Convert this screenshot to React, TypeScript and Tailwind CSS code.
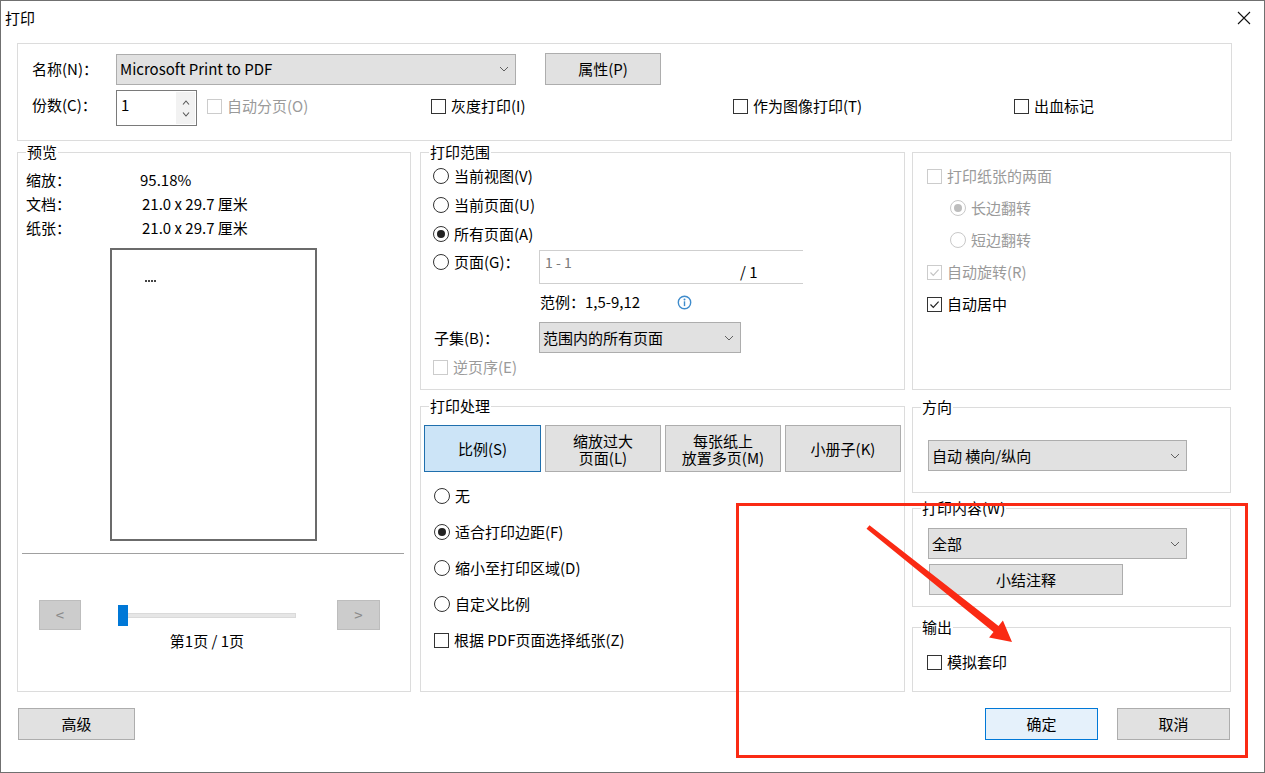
import React from "react";

function CheckBox({ checked, disabled }: { checked?: boolean; disabled?: boolean }) {
  return (
    <span
      className={`w-[15px] h-[15px] border bg-white flex items-center justify-center shrink-0 ${
        disabled ? "border-[#cccccc]" : "border-[#333333]"
      }`}
    >
      {checked && (
        <svg width="11" height="11" viewBox="0 0 11 11">
          <path d="M1.5 5.5 L4.3 8.3 L9.6 2.6" fill="none" stroke={disabled ? "#c4c4c4" : "#222222"} strokeWidth="1.2" />
        </svg>
      )}
    </span>
  );
}

function Check({ label, checked, disabled, h = "h-[20px]" }: { label: string; checked?: boolean; disabled?: boolean; h?: string }) {
  return (
    <div className={`flex items-center ${h}`}>
      <CheckBox checked={checked} disabled={disabled} />
      <span className={`ml-[5px] whitespace-nowrap ${disabled ? "text-[#9a9a9a]" : "text-black"}`}>{label}</span>
    </div>
  );
}

function RadioDot({ checked, disabled }: { checked?: boolean; disabled?: boolean }) {
  return (
    <span
      className={`w-[16px] h-[16px] rounded-full border bg-white flex items-center justify-center shrink-0 ${
        disabled ? "border-[#c8c8c8]" : "border-[#333333]"
      }`}
    >
      {checked && <span className={`w-[8px] h-[8px] rounded-full ${disabled ? "bg-[#bdbdbd]" : "bg-[#222222]"}`} />}
    </span>
  );
}

function Radio({ label, checked, disabled, h }: { label: string; checked?: boolean; disabled?: boolean; h: string }) {
  return (
    <div className={`flex items-center ${h}`}>
      <RadioDot checked={checked} disabled={disabled} />
      <span className={`ml-[5px] whitespace-nowrap ${disabled ? "text-[#9a9a9a]" : "text-black"}`}>{label}</span>
    </div>
  );
}

function Chevron() {
  return (
    <svg width="10" height="6" viewBox="0 0 10 6" className="shrink-0">
      <path d="M1 1 L5 5 L9 1" fill="none" stroke="#606060" strokeWidth="1" />
    </svg>
  );
}

function Dropdown({ text, w }: { text: string; w: string }) {
  return (
    <div className={`flex items-center justify-between h-[31px] ${w} bg-[#e1e1e1] border border-[#adadad] pl-[3px] pr-[6px]`}>
      <span className="whitespace-nowrap">{text}</span>
      <Chevron />
    </div>
  );
}

function Btn({ children, className }: { children: React.ReactNode; className: string }) {
  return (
    <div className={`flex items-center justify-center text-center bg-[#e1e1e1] border border-[#adadad] ${className}`}>
      {children}
    </div>
  );
}

function Group({ legend, className, children }: { legend?: string; className: string; children?: React.ReactNode }) {
  return (
    <div className={`relative border border-[#dcdcdc] ${className}`}>
      {legend && (
        <span className="absolute left-[8px] top-[-11px] bg-white px-[1px] leading-[20px] whitespace-nowrap">{legend}</span>
      )}
      {children}
    </div>
  );
}

export default function App() {
  return (
    <div className="w-[1265px] h-[773px] bg-white border border-[#707070] relative overflow-hidden text-[15px] leading-[20px] text-black font-['Noto_Sans_CJK_SC','Noto_Sans',sans-serif]">
      {/* title bar */}
      <div className="h-[34px] flex items-center justify-between pl-[4px] pr-[13px]">
        <span>打印</span>
        <svg width="14" height="14" viewBox="0 0 14 14">
          <path d="M1 1 L13 13 M13 1 L1 13" stroke="#111" strokeWidth="1.1" />
        </svg>
      </div>

      <div className="pl-[16px] pt-[8px]">
        {/* top group */}
        <Group className="w-[1215px] h-[98px] pl-[14px] pt-[9px]">
          <div className="flex items-center h-[32px]">
            <span className="w-[84px] whitespace-nowrap">名称(N)：</span>
            <Dropdown text="Microsoft Print to PDF" w="w-[400px]" />
            <Btn className="ml-[29px] w-[116px] h-[32px]">属性(P)</Btn>
          </div>
          <div className="flex items-start mt-[5px]">
            <span className="w-[84px] mt-[5px] whitespace-nowrap">份数(C)：</span>
            <div className="w-[81px] h-[36px] border border-[#7a7a7a] flex bg-white">
              <span className="flex-1 pl-[4px] pt-[4px]">1</span>
              <div className="w-[19px] my-[1px] mr-[1px] bg-[#f2f2f2] flex flex-col items-center justify-center gap-[7px]">
                <svg width="8" height="5" viewBox="0 0 8 5">
                  <path d="M1 4.5 L4 1 L7 4.5" fill="none" stroke="#555" strokeWidth="1.1" />
                </svg>
                <svg width="8" height="5" viewBox="0 0 8 5">
                  <path d="M1 0.5 L4 4 L7 0.5" fill="none" stroke="#555" strokeWidth="1.1" />
                </svg>
              </div>
            </div>
            <div className="ml-[10px] w-[224px] mt-[6px]">
              <Check label="自动分页(O)" disabled />
            </div>
            <div className="w-[302px] mt-[6px]">
              <Check label="灰度打印(I)" />
            </div>
            <div className="w-[281px] mt-[6px]">
              <Check label="作为图像打印(T)" />
            </div>
            <div className="mt-[6px]">
              <Check label="出血标记" />
            </div>
          </div>
        </Group>

        {/* middle area */}
        <div className="flex items-start mt-[11px]">
          {/* preview */}
          <Group legend="预览" className="w-[394px] h-[540px]">
            <div className="pl-[8px] pt-[15px]">
              <div className="flex items-center h-[24px]">
                <span className="w-[114px]">缩放：</span>
                <span>95.18%</span>
              </div>
              <div className="flex items-center h-[24px]">
                <span className="w-[116px]">文档：</span>
                <span>21.0 x 29.7 厘米</span>
              </div>
              <div className="flex items-center h-[24px]">
                <span className="w-[116px]">纸张：</span>
                <span>21.0 x 29.7 厘米</span>
              </div>
            </div>
            <div className="ml-[92px] mt-[8px] w-[207px] h-[293px] border-2 border-[#6b6b6b] pl-[33px] pt-[30px]">
              <div className="w-[12px] h-[2px] bg-[repeating-linear-gradient(90deg,#444444_0px,#444444_2px,transparent_2px,transparent_3px)]" />
            </div>
            <div className="ml-[4px] mr-[6px] mt-[12px] h-px bg-[#a0a0a0]" />
            <div className="flex items-start mt-[46px] ml-[21px]">
              <div className="w-[42px] h-[30px] bg-[#cccccc] border border-[#bdbdbd] text-[#8a8a8a] flex items-center justify-center">
                &lt;
              </div>
              <div className="ml-[37px] w-[178px] flex flex-col items-center pt-[5px]">
                <div className="flex items-center w-full">
                  <div className="w-[10px] h-[21px] bg-[#0078d7]" />
                  <div className="flex-1 h-[5px] bg-[#e6e6e6] border-y border-r border-[#dadada]" />
                </div>
                <span className="mt-[5px] whitespace-nowrap">第1页 / 1页</span>
              </div>
              <div className="ml-[41px] w-[43px] h-[30px] bg-[#cccccc] border border-[#bdbdbd] text-[#8a8a8a] flex items-center justify-center">
                &gt;
              </div>
            </div>
          </Group>

          {/* middle column */}
          <div className="ml-[9px] w-[485px] flex flex-col">
            <Group legend="打印范围" className="h-[238px] pl-[12px] pt-[9px]">
              <Radio label="当前视图(V)" h="h-[28px]" />
              <Radio label="当前页面(U)" h="h-[29px]" />
              <Radio label="所有页面(A)" checked h="h-[29px]" />
              <div className="flex items-start">
                <div className="w-[106px]">
                  <Radio label="页面(G)：" h="h-[28px]" />
                </div>
                <div className="mt-[2px] w-[264px] h-[34px] border border-r-0 border-[#cfcfcf] flex pl-[5px]">
                  <span className="w-[195px] self-start mt-[1px] text-[14px] text-[#7a7a7a]">1 - 1</span>
                  <span className="self-end mb-[1px]">/ 1</span>
                </div>
              </div>
              <div className="flex items-center mt-[8px] ml-[107px] h-[20px]">
                <span className="w-[137px] whitespace-nowrap">范例：1,5-9,12</span>
                <svg width="15" height="15" viewBox="0 0 15 15">
                  <circle cx="7.5" cy="7.5" r="6.2" fill="none" stroke="#3f8ccc" strokeWidth="1.4" />
                  <circle cx="7.5" cy="4.6" r="1" fill="#3f8ccc" />
                  <rect x="6.8" y="6.3" width="1.4" height="4.8" fill="#3f8ccc" />
                </svg>
              </div>
              <div className="flex items-center mt-[10px]">
                <span className="w-[105px] ml-[1px] whitespace-nowrap">子集(B)：</span>
                <Dropdown text="范围内的所有页面" w="w-[202px]" />
              </div>
              <Check label="逆页序(E)" disabled h="h-[28px]" />
            </Group>

            <Group legend="打印处理" className="mt-[16px] h-[286px] pl-[3px] pt-[18px]">
              <div className="flex gap-[4px]">
                <div className="w-[117px] h-[47px] bg-[#cce4f7] border border-[#1f6fad] flex items-center justify-center">
                  比例(S)
                </div>
                <Btn className="w-[116px] h-[47px] leading-[17px]">
                  <span>
                    缩放过大
                    <br />
                    页面(L)
                  </span>
                </Btn>
                <Btn className="w-[116px] h-[47px] leading-[17px]">
                  <span>
                    每张纸上
                    <br />
                    放置多页(M)
                  </span>
                </Btn>
                <Btn className="w-[116px] h-[47px]">小册子(K)</Btn>
              </div>
              <div className="mt-[6px] pl-[10px]">
                <Radio label="无" h="h-[36px]" />
                <Radio label="适合打印边距(F)" checked h="h-[36px]" />
                <Radio label="缩小至打印区域(D)" h="h-[36px]" />
                <Radio label="自定义比例" h="h-[36px]" />
                <Check label="根据 PDF页面选择纸张(Z)" h="h-[36px]" />
              </div>
            </Group>
          </div>

          {/* right column */}
          <div className="ml-[7px] w-[319px] flex flex-col">
            <Group className="h-[238px] pl-[14px] pt-[7px]">
              <Check label="打印纸张的两面" disabled h="h-[32px]" />
              <div className="ml-[23px]">
                <Radio label="长边翻转" checked disabled h="h-[32px]" />
                <Radio label="短边翻转" disabled h="h-[32px]" />
              </div>
              <Check label="自动旋转(R)" checked disabled h="h-[32px]" />
              <Check label="自动居中" checked h="h-[32px]" />
            </Group>
            <Group legend="方向" className="mt-[17px] h-[86px] pl-[15px] pt-[32px]">
              <Dropdown text="自动 横向/纵向" w="w-[259px]" />
            </Group>
            <Group legend="打印内容(W)" className="mt-[15px] h-[99px] pl-[15px] pt-[19px]">
              <Dropdown text="全部" w="w-[259px]" />
              <Btn className="mt-[5px] ml-[1px] w-[194px] h-[31px]">小结注释</Btn>
            </Group>
            <Group legend="输出" className="mt-[20px] h-[65px] pl-[14px] pt-[20px]">
              <Check label="模拟套印" h="h-[28px]" />
            </Group>
          </div>
        </div>

        {/* bottom buttons */}
        <div className="flex items-center mt-[16px]">
          <Btn className="ml-[1px] w-[117px] h-[32px]">高级</Btn>
          <div className="ml-[850px] w-[113px] h-[32px] bg-[#e5f1fb] border border-[#0078d7] flex items-center justify-center">
            确定
          </div>
          <Btn className="ml-[19px] w-[113px] h-[32px]">取消</Btn>
        </div>
      </div>

      {/* red annotation */}
      <div className="absolute left-[735px] top-[502px] w-[512px] h-[255px] border-[3px] border-[#fa2a14] pointer-events-none" />
      <svg className="absolute left-[-1px] top-[-1px] pointer-events-none" width="1265" height="773" viewBox="0 0 1265 773">
        <polygon
          points="866.5,528.8 869.5,525.2 998.5,625.9 1002.9,620.4 1012,642 989.1,637.6 993.5,632.1"
          fill="#fa2a14"
        />
      </svg>
    </div>
  );
}
